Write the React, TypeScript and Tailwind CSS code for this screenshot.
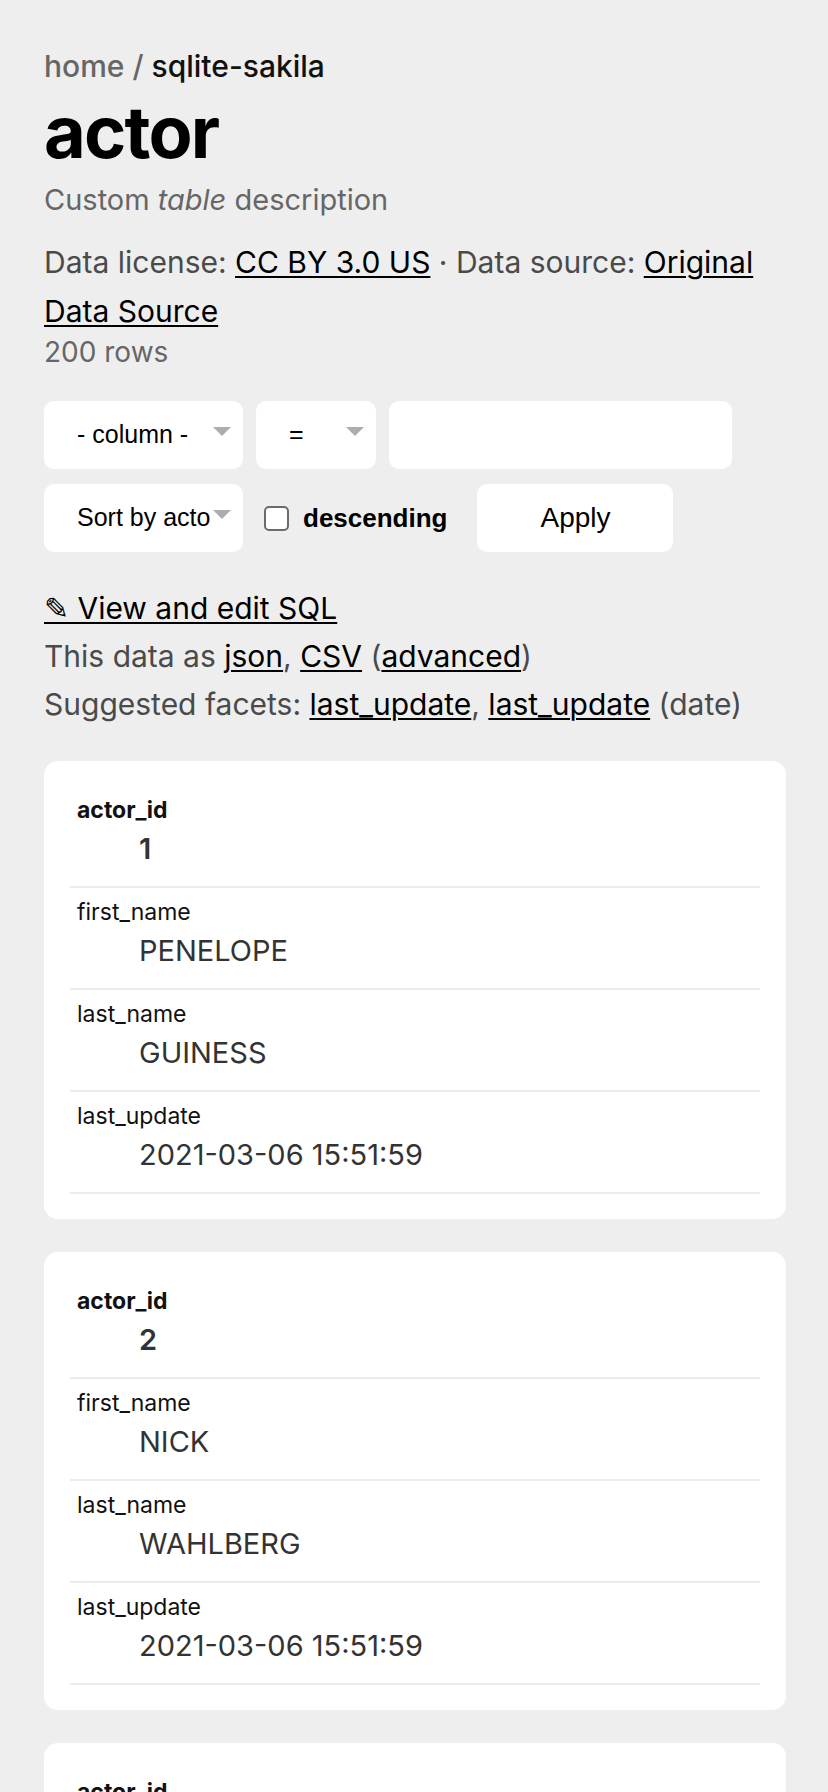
import type { ReactNode } from 'react';

type Actor = {
  actor_id: number;
  first_name: string;
  last_name: string;
  last_update: string;
};

const actors: Actor[] = [
  { actor_id: 1, first_name: 'PENELOPE', last_name: 'GUINESS', last_update: '2021-03-06 15:51:59' },
  { actor_id: 2, first_name: 'NICK', last_name: 'WAHLBERG', last_update: '2021-03-06 15:51:59' },
  { actor_id: 3, first_name: 'ED', last_name: 'CHASE', last_update: '2021-03-06 15:51:59' },
];

function Link({ children }: { children: ReactNode }) {
  return (
    <a href="#" className="text-black underline decoration-2 underline-offset-[3px]">
      {children}
    </a>
  );
}

function Arrow() {
  return (
    <svg viewBox="0 0 18 9" className="mt-[26px] h-[9px] w-[18px] shrink-0 self-start">
      <polygon points="0,0 18,0 9,9" fill="#adadad" />
    </svg>
  );
}

function FakeSelect({ label, width }: { label: string; width: string }) {
  return (
    <div className={`flex h-[68px] items-center rounded-[10px] bg-white pl-[33px] pr-[12px] ${width}`}>
      <span className="mr-[2px] flex-1 overflow-hidden whitespace-nowrap text-[25px] text-black">{label}</span>
      <Arrow />
    </div>
  );
}

function Row({ label, value, primary }: { label: string; value: string; primary?: boolean }) {
  return (
    <div className="border-b-2 border-[#ececec] pb-[13px] pt-[9px]">
      <div className={`pl-[7px] text-[23px] leading-[30px] text-[#111] ${primary ? 'font-bold' : ''}`}>{label}</div>
      <div className={`pl-[69px] text-[29px] leading-[48px] text-[#333] ${primary ? 'font-semibold' : ''}`}>
        {value}
      </div>
    </div>
  );
}

export default function App() {
  return (
    <div className="min-h-screen bg-[#eeeeee] pb-10 pl-[44px] pr-[42px] pt-[46px] font-['Inter',sans-serif]">
      <p className="text-[30px] font-medium leading-[40px] text-[#666]">
        home / <span className="text-[#111]">sqlite-sakila</span>
      </p>
      <h1 className="mt-[10px] text-[72px] font-bold leading-[72px] tracking-tight text-black">actor</h1>
      <p className="mt-[11px] text-[29px] leading-[42px] text-[#666]">
        Custom <em>table</em> description
      </p>
      <p className="mt-[17px] text-[30px] leading-[49px] text-[#4a4a4a]">
        Data license: <Link>CC BY 3.0 US</Link> · Data source: <Link>Original Data Source</Link>
      </p>
      <p className="mt-[1px] text-[28px] leading-[30px] text-[#666]">200 rows</p>

      <div className="mt-[34px] flex flex-col gap-[15px] font-['Liberation_Sans',Arial,sans-serif]">
        <div className="flex gap-[13px]">
          <FakeSelect label="- column -" width="w-[199px]" />
          <FakeSelect label="=" width="w-[120px]" />
          <div className="h-[68px] w-[343px] rounded-[10px] bg-white" />
        </div>
        <div className="flex items-center">
          <FakeSelect label="Sort by actor_id" width="w-[199px]" />
          <span className="ml-[21px] h-[25px] w-[25px] rounded-[5px] border-2 border-[#6b6b6b] bg-white" />
          <span className="ml-[14px] text-[26px] font-bold text-black">descending</span>
          <button className="ml-[30px] h-[68px] w-[196px] rounded-[10px] bg-white text-[28px] text-black">
            Apply
          </button>
        </div>
      </div>

      <div className="mt-[32px] text-[30px] leading-[48px] text-[#4a4a4a]">
        <p>
          <Link>✎ View and edit SQL</Link>
        </p>
        <p>
          This data as <Link>json</Link>, <Link>CSV</Link> (<Link>advanced</Link>)
        </p>
        <p>
          Suggested facets: <Link>last_update</Link>, <Link>last_update</Link> (date)
        </p>
      </div>

      <div className="mt-[33px] flex flex-col gap-[33px]">
        {actors.map((a) => (
          <div key={a.actor_id} className="rounded-[14px] bg-white px-[26px] py-[25px]">
            <Row label="actor_id" value={String(a.actor_id)} primary />
            <Row label="first_name" value={a.first_name} />
            <Row label="last_name" value={a.last_name} />
            <Row label="last_update" value={a.last_update} />
          </div>
        ))}
      </div>
    </div>
  );
}
